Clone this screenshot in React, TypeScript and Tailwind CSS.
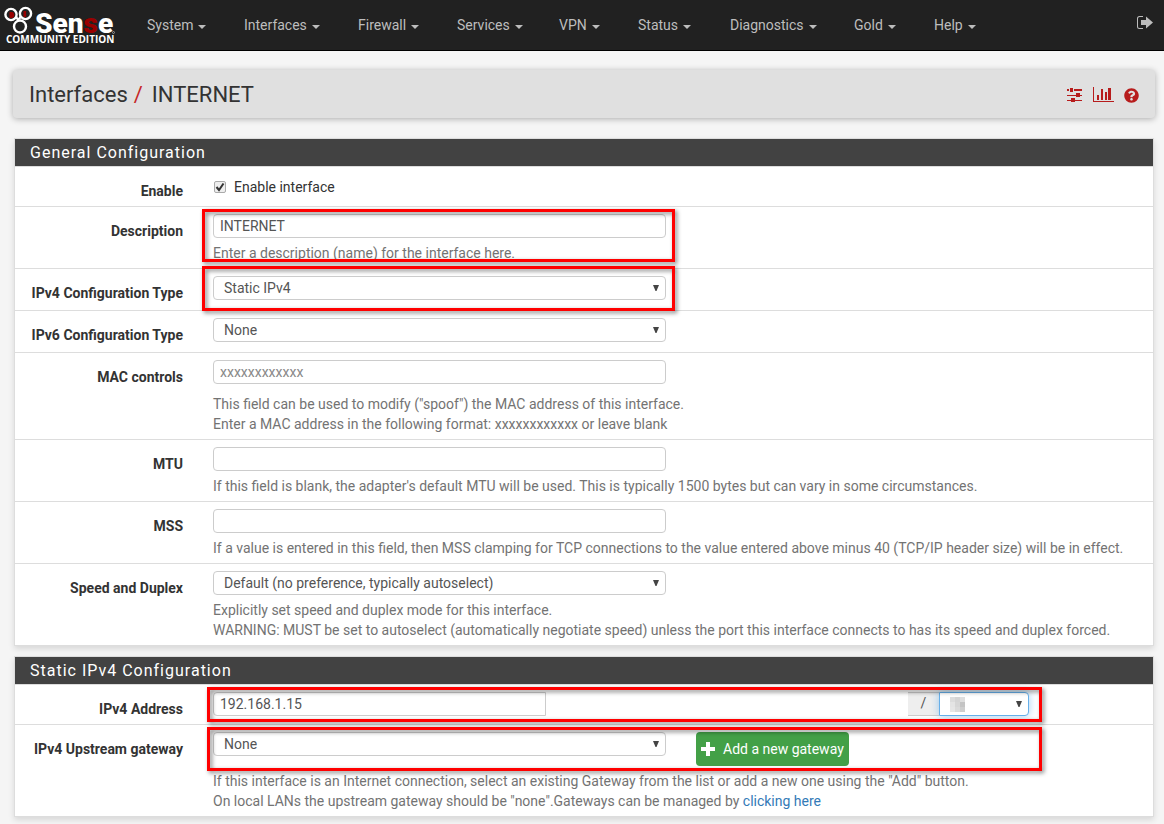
import React from "react";
import { FaQuestionCircle } from "react-icons/fa";

const menu = [
  { label: "System", width: "w-[97px]" },
  { label: "Interfaces", width: "w-[114px]" },
  { label: "Firewall", width: "w-[99px]" },
  { label: "Services", width: "w-[102px]" },
  { label: "VPN", width: "w-[79px]" },
  { label: "Status", width: "w-[92px]" },
  { label: "Diagnostics", width: "w-[124px]" },
  { label: "Gold", width: "w-[80px]" },
  { label: "Help", width: "w-[80px]" },
];

function Logo() {
  return (
    <svg viewBox="0 0 112 40" className="h-10 w-28 shrink-0" role="img" aria-label="Sense Community Edition">
      <g fill="none" stroke="#fff" strokeWidth="2.4">
        <circle cx="7" cy="9.5" r="5.6" />
        <circle cx="21.500" cy="8.5" r="5.6" />
        <circle cx="16" cy="21.500" r="6" />
        <path d="M12 12c2 3 3 3 5-1" />
      </g>
      <path d="M5.500 7h2.500c3 0 3 6 0 6H5.500z" fill="#900" />
      <rect x="19.500" y="6" width="2.600" height="6" fill="#900" />
      <text x="31" y="28" fontFamily="Roboto, sans-serif" fontWeight="900" fontSize="28" fill="#fff">
        Sen<tspan fill="#900">s</tspan>e
      </text>
      <circle cx="109.500" cy="27.500" r="1" fill="none" stroke="#aaa" strokeWidth="0.800" />
      <text x="2" y="37.500" fontFamily="Open Sans, sans-serif" fontWeight="700" fontSize="10" fill="#fff">
        COMMUNITY EDITION
      </text>
    </svg>
  );
}

function LogoutIcon() {
  return (
    <svg viewBox="0 0 16 14" className="h-[14px] w-4" fill="currentColor" aria-hidden="true">
      <path d="M6 0v1H2.500Q1 1 1 2.500v8Q1 12 2.500 12H6v1H2.500Q0 13 0 10.500v-8Q0 0 2.500 0zM4 4h5V0.500L16 6.500 9 12.500V9H4z" />
    </svg>
  );
}

function PlusIcon() {
  return (
    <svg viewBox="0 0 14 14" className="h-[14px] w-[14px]" fill="currentColor" aria-hidden="true">
      <path d="M5 0h4v5h5v4H9v5H5V9H0V5h5z" />
    </svg>
  );
}

function SlidersIcon() {
  return (
    <svg viewBox="0 0 16 16" className="h-4 w-4" fill="#b71c1c" aria-hidden="true">
      <path d="M0 2h2v2H0zM3 1h3v4H3zM7 2h8v2H7zM0 8h9v1H0zM9 6h4v4H9zM13 8h2v1h-2zM0 13h4v1H0zM4 11h4v4H4zM8 13h7v1H8z" />
    </svg>
  );
}

function ChartIcon() {
  return (
    <svg viewBox="0 0 21 16" className="h-4 w-[21px]" fill="#b71c1c" aria-hidden="true">
      <path d="M0 0h1v14h20v1H0zM4 8h2v5H4zM8 2h2v11H8zM12 5h2v8h-2zM15 1h3v12h-3z" />
    </svg>
  );
}

function Panel({ title, children }: { title: string; children: React.ReactNode }) {
  return (
    <section className="mb-[10px] border border-[#ddd] bg-white shadow-[0_3px_6px_rgba(0,0,0,0.12)]">
      <h2 className="h-7 border-b border-[#ddd] bg-[#424242] px-[15px] text-[16px] leading-7 tracking-[1px] text-white">
        {title}
      </h2>
      <div className="divide-y divide-[#ddd]">{children}</div>
    </section>
  );
}

function Row({
  label,
  id,
  end = "pb-[5px]",
  children,
}: {
  label: string;
  id: string;
  end?: string;
  children: React.ReactNode;
}) {
  return (
    <div className="flex gap-[30px]">
      <label htmlFor={id} className="w-[168px] shrink-0 pt-[14px] text-right font-bold whitespace-nowrap text-[#333]">
        {label}
      </label>
      <div className={"relative min-w-0 flex-1 pt-[7px] pr-[15px] " + end}>{children}</div>
    </div>
  );
}

function TextBox({ id, value, placeholder }: { id: string; value?: string; placeholder?: string }) {
  return (
    <input
      id={id}
      type="text"
      defaultValue={value}
      placeholder={placeholder}
      className="block h-6 w-full max-w-[453px] rounded border border-[#ccc] bg-white px-[6px] text-[#555] placeholder-[#888]"
    />
  );
}

function Select({ id, value }: { id: string; value: string }) {
  return (
    <div className="relative w-full max-w-[453px]">
      <select
        id={id}
        className="block h-6 w-full appearance-none rounded border border-[#ccc] bg-white px-[10px] text-[#555]"
      >
        <option>{value}</option>
      </select>
      <Arrow />
    </div>
  );
}

function Arrow() {
  return (
    <svg viewBox="0 0 6 6" className="pointer-events-none absolute top-[9px] right-[7px] h-[6px] w-[6px]" fill="#444" aria-hidden="true">
      <path d="M0 0h6L3.500 6h-1z" />
    </svg>
  );
}

function Help({ children, gap = "mt-[5px]" }: { children: React.ReactNode; gap?: string }) {
  return <p className={"text-[#737373] " + gap}>{children}</p>;
}

function Highlight({ place }: { place: string }) {
  return (
    <div
      className={
        "pointer-events-none absolute z-10 border-3 border-[#f00] drop-shadow-[2px_2px_2px_rgba(0,0,0,0.5)] " + place
      }
    />
  );
}

export default function App() {
  return (
    <div className="min-h-screen bg-[#f5f5f5] font-['Roboto',sans-serif] text-[14px] leading-5 text-[#333]">
      <nav className="flex h-[51px] items-center border-b border-black bg-[#212121] pr-[11px] pl-1 text-[#bdbdbd]">
        <a href="#" className="mr-[31px]">
          <Logo />
        </a>
        <ul className="flex flex-1">
          {menu.map((item) => (
            <li key={item.label} className={item.width}>
              <a href="#" className="flex items-center gap-[5px]">
                {item.label}
                <svg viewBox="0 0 8 4" className="mt-1 h-1 w-2" fill="currentColor" aria-hidden="true">
                  <path d="M0 0h8L4 4z" />
                </svg>
              </a>
            </li>
          ))}
        </ul>
        <a href="#" aria-label="Log out" className="pb-1">
          <LogoutIcon />
        </a>
      </nav>

      <header className="mr-[9px] mt-[19px] ml-[13px] flex h-12 items-center justify-between rounded bg-[#e0e0e0] px-4 pt-[2px] shadow-[0_1px_6px_rgba(0,0,0,0.3)]">
        <h1 className="flex text-[22px] leading-6">
          <span>Interfaces</span>
          <span className="mr-[9px] ml-[6px] text-[#c62828]">/</span>
          <span>INTERNET</span>
        </h1>
        <div className="flex items-center gap-[10px] text-[#b71c1c]">
          <a href="#" aria-label="Settings">
            <SlidersIcon />
          </a>
          <a href="#" aria-label="Status graph">
            <ChartIcon />
          </a>
          <a href="#" aria-label="Help">
            <FaQuestionCircle size={15} />
          </a>
        </div>
      </header>

      <main className="mr-[10px] ml-[14px] pt-5">
        <Panel title="General Configuration">
          <Row label="Enable" id="enable" end="pb-3">
            <div className="flex h-5 items-center gap-2 pt-[5px]">
              <input
                id="enable"
                type="checkbox"
                defaultChecked
                className="peer ml-[1px] h-3 w-3 appearance-none rounded-xs border border-[#aaa] bg-[#eee]"
              />
              <svg viewBox="0 0 12 12" className="pointer-events-none absolute left-[1px] hidden h-3 w-3 peer-checked:block" fill="none" stroke="#333" strokeWidth="2" aria-hidden="true">
                <path d="M2.500 6l2.500 3 4.500-6.500" />
              </svg>
              <label htmlFor="enable">Enable interface</label>
            </div>
          </Row>
          <Row label="Description" id="description">
            <TextBox id="description" value="INTERNET" />
            <Help>Enter a description (name) for the interface here.</Help>
            <Highlight place="top-[2px] -left-[11px] h-[53px] w-[473px]" />
          </Row>
          <Row label="IPv4 Configuration Type" id="ipv4type" end="pb-[10px]">
            <Select id="ipv4type" value="Static IPv4" />
            <Highlight place="-top-[3px] -left-[11px] h-[45px] w-[473px]" />
          </Row>
          <Row label="IPv6 Configuration Type" id="ipv6type" end="pb-[10px]">
            <Select id="ipv6type" value="None" />
          </Row>
          <Row label="MAC controls" id="mac">
            <TextBox id="mac" placeholder="xxxxxxxxxxxx" />
            <Help gap="mt-[10px]">
              This field can be used to modify ("spoof") the MAC address of this interface.
              <br />
              Enter a MAC address in the following format: xxxxxxxxxxxx or leave blank
            </Help>
          </Row>
          <Row label="MTU" id="mtu">
            <TextBox id="mtu" />
            <Help>
              If this field is blank, the adapter's default MTU will be used. This is typically 1500 bytes but can vary
              in some circumstances.
            </Help>
          </Row>
          <Row label="MSS" id="mss">
            <TextBox id="mss" />
            <Help>
              If a value is entered in this field, then MSS clamping for TCP connections to the value entered above
              minus 40 (TCP/IP header size) will be in effect.
            </Help>
          </Row>
          <Row label="Speed and Duplex" id="speed">
            <Select id="speed" value="Default (no preference, typically autoselect)" />
            <Help>
              Explicitly set speed and duplex mode for this interface.
              <br />
              WARNING: MUST be set to autoselect (automatically negotiate speed) unless the port this interface connects
              to has its speed and duplex forced.
            </Help>
          </Row>
        </Panel>

        <Panel title="Static IPv4 Configuration">
          <Row label="IPv4 Address" id="address" end="pb-2">
            <div className="flex max-w-[816px] items-center justify-between">
              <input
                id="address"
                type="text"
                defaultValue="192.168.1.15"
                className="h-6 w-[333px] rounded-l border border-[#ccc] bg-white px-[6px] text-[#555]"
              />
              <div className="flex">
                <span className="h-6 w-[31px] border-y border-[#ccc] bg-[#eee] text-center text-[#555]">/</span>
                <div className="relative">
                  <select
                    aria-label="Subnet mask"
                    className="block h-6 w-[90px] appearance-none rounded-r border border-[#66afe9] bg-white shadow-[0_0_8px_rgba(102,175,233,0.6)]"
                  />
                  <span className="absolute top-[5px] left-[11px] grid h-[15px] w-[15px] grid-cols-3 grid-rows-3">
                    <i className="bg-[#dcdcdc]" />
                    <i className="bg-[#d4d4d4]" />
                    <i className="bg-[#dedede]" />
                    <i className="bg-[#e4e4e4]" />
                    <i className="bg-[#d6d6d6]" />
                    <i className="bg-[#c4c4c4]" />
                    <i className="bg-[#e6e6e6]" />
                    <i className="bg-[#dadada]" />
                    <i className="bg-[#cecece]" />
                  </span>
                  <Arrow />
                </div>
              </div>
            </div>
            <Highlight place="top-[2px] -left-[6px] h-[35px] w-[835px]" />
          </Row>
          <Row label="IPv4 Upstream gateway" id="gateway">
            <div className="flex items-start gap-[30px]">
              <Select id="gateway" value="None" />
              <button
                type="button"
                className="flex h-[34px] shrink-0 items-center gap-2 rounded bg-[#43a047] px-[5px] text-white"
              >
                <PlusIcon />
                Add a new gateway
              </button>
            </div>
            <Help>
              If this interface is an Internet connection, select an existing Gateway from the list or add a new one
              using the "Add" button.
              <br />
              On local LANs the upstream gateway should be "none".Gateways can be managed by{" "}
              <a href="#" className="text-[#337ab7]">
                clicking here
              </a>
            </Help>
            <Highlight place="top-[2px] -left-[6px] h-[44px] w-[835px]" />
          </Row>
        </Panel>
      </main>
    </div>
  );
}
